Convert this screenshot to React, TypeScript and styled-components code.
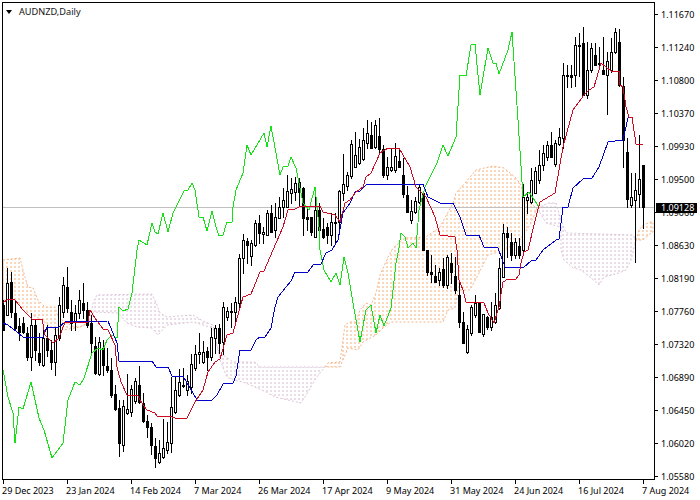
import React from "react";
import styled, { createGlobalStyle } from "styled-components";

const Global = createGlobalStyle`
  html, body { margin: 0; padding: 0; background: #fff; }
  body { width: 700px; height: 500px; overflow: hidden; }
`;

const FONT = `"Noto Sans", "Liberation Sans", Arial, sans-serif`;

const Page = styled.div`
  position: relative;
  display: flex;
  width: 700px;
  height: 500px;
  background: #fff;
  color: #000;
  font-family: ${FONT};
  font-size: 9.2px;
  overflow: hidden;
`;
const ChartColumn = styled.div`
  display: flex;
  flex-direction: column;
  width: 655px;
  flex: none;
  padding: 2px 0 0 2px;
  box-sizing: border-box;
`;
const Frame = styled.div`
  position: relative;
  width: 653px;
  height: 478px;
  box-sizing: border-box;
  border: 1px solid #000;
  flex: none;
`;
const Plot = styled.svg`
  display: block;
  width: 651px;
  height: 476px;
`;
const Title = styled.div`
  position: absolute;
  left: 3px;
  top: 3px;
  display: flex;
  align-items: center;
  gap: 7px;
  line-height: 11px;
  color: #111;
`;
const TitleArrow = styled.span`
  width: 0;
  height: 0;
  border-left: 3.5px solid transparent;
  border-right: 3.5px solid transparent;
  border-top: 4px solid #000;
`;
const DateAxis = styled.div`
  display: grid;
  grid-template-columns: repeat(11, 64px);
  width: 653px;
`;
const DateCell = styled.div`
  display: flex;
  flex-direction: column;
  white-space: nowrap;
  font-size: 9px;
  line-height: 11px;
`;
const DateTick = styled.span`
  display: block;
  width: 1px;
  height: 4px;
  margin-left: 1px;
  background: #000;
`;
const DateLabel = styled.span`
  margin-top: 1px;
`;
const PriceAxis = styled.div`
  display: flex;
  flex-direction: column;
  gap: 21px;
  padding-top: 8px;
  flex: none;
`;
const PriceRow = styled.div`
  display: flex;
  align-items: center;
  height: 12px;
  font-size: 9px;
`;
const PriceTick = styled.span`
  display: block;
  width: 3px;
  height: 1px;
  background: #000;
  margin-right: 3px;
`;
const PriceTag = styled.div`
  position: absolute;
  left: 656px;
  top: 203px;
  width: 41px;
  height: 10px;
  padding-left: 5px;
  box-sizing: border-box;
  background: #000;
  color: #fff;
  font-size: 9px;
  line-height: 10px;
`;
const Trace = styled.polyline<{ $color: string }>`
  fill: none;
  stroke: ${(p) => p.$color};
  stroke-width: 1;
  shape-rendering: crispEdges;
`;
const CloudEdge = styled.polygon<{ $warm: boolean }>`
  fill: none;
  stroke: ${(p) => (p.$warm ? "#f3b68c" : "#dcc4d8")};
  stroke-width: 1;
  stroke-dasharray: 2 2;
`;
const CloudDots = styled.line<{ $warm: boolean }>`
  stroke: ${(p) => (p.$warm ? "#fad6ba" : "#ebdde8")};
  stroke-width: 2;
  stroke-dasharray: 2 2;
  shape-rendering: crispEdges;
`;
const Wick = styled.line`
  stroke: #000;
  stroke-width: 1;
  shape-rendering: crispEdges;
`;
const Body = styled.rect<{ $bull: boolean }>`
  fill: ${(p) => (p.$bull ? "#fff" : "#000")};
  stroke: #000;
  stroke-width: 1;
  shape-rendering: crispEdges;
`;
const LastLine = styled.line`
  stroke: #c0c0c0;
  stroke-width: 1;
  shape-rendering: crispEdges;
`;

type C = [number, number, number, number, number];
const candles: C[] = [
  [300,330,305,330,0],[268,315,283,315,1],[272,317,282,312,0],[300,330,313,328,0],
  [318,340,326,332,0],[317,333,323,332,0],[327,360,333,357,0],[313,370,325,357,1],
  [320,360,325,350,0],[333,365,353,362,0],[330,366,338,365,1],[325,356,338,350,0],
  [340,369,350,362,0],[328,375,335,362,1],[297,340,305,338,1],[277,317,285,312,1],
  [267,312,287,308,0],[300,330,312,323,0],[305,330,313,322,1],[290,318,300,313,1],
  [283,318,303,310,0],[302,327,310,325,0],[315,352,323,343,0],[337,374,346,373,0],
  [337,375,342,374,1],[340,375,348,365,0],[348,372,366,370,0],[358,397,370,395,0],
  [385,410,394,409,0],[400,456,408,443,0],[400,451,406,445,1],[374,414,409,413,1],
  [385,416,389,412,1],[378,403,381,401,1],[366,403,385,402,0],[393,422,403,421,0],
  [415,437,421,427,0],[423,454,427,445,0],[438,467,446,458,0],[440,463,453,462,1],
  [419,458,448,457,1],[422,453,442,450,1],[377,452,407,443,1],[377,413,390,412,1],
  [369,396,382,395,1],[368,387,385,386,1],[375,395,381,390,1],[354,393,364,387,1],
  [345,370,354,368,1],[333,363,352,354,1],[341,363,352,362,1],[347,370,351,357,0],
  [328,360,337,357,1],[325,353,328,338,1],[324,353,328,343,0],[302,354,307,342,1],
  [307,320,311,317,1],[303,327,311,312,0],[297,322,302,312,1],[254,308,258,303,1],
  [234,273,240,258,1],[238,263,241,245,0],[240,265,243,256,1],[220,246,223,245,1],
  [215,243,223,233,0],[227,243,232,234,1],[210,235,213,235,1],[205,232,213,232,0],
  [203,237,217,230,1],[197,218,207,218,1],[188,217,200,207,1],[175,207,191,207,1],
  [178,203,189,193,1],[177,200,183,192,1],[178,205,182,192,0],[187,235,188,218,0],
  [208,230,217,219,0],[217,235,217,232,0],[187,237,210,237,1],[203,242,210,230,0],
  [218,238,229,237,0],[223,243,227,235,0],[213,245,222,235,1],[213,243,222,223,0],
  [190,230,191,222,1],[154,200,184,193,1],[172,190,175,186,1],[140,178,144,176,1],
  [132,167,155,167,1],[139,164,147,163,1],[128,160,140,159,1],[120,148,133,143,1],
  [122,148,135,148,0],[120,148,125,147,1],[118,152,136,149,0],[145,177,149,175,0],
  [157,179,167,175,1],[148,171,167,170,1],[143,172,156,170,1],[148,167,161,167,0],
  [158,197,175,194,0],[186,212,195,212,0],[200,223,211,220,1],[197,213,201,212,1],
  [184,203,187,202,1],[193,250,193,250,0],[250,275,250,272,0],[255,282,272,274,0],
  [265,282,276,282,0],[268,285,272,280,1],[258,287,269,285,0],[255,288,257,285,1],
  [253,283,263,272,0],[257,293,276,290,0],[283,327,295,322,0],[312,343,322,343,0],
  [325,353,329,352,1],[305,335,307,333,1],[295,317,303,315,1],[302,332,303,332,0],
  [314,336,314,334,1],[316,329,317,327,0],[302,330,317,327,1],[293,323,305,322,1],
  [258,309,268,308,1],[224,277,233,277,1],[227,257,233,237,0],[233,260,242,255,0],
  [238,258,242,255,1],[238,258,246,255,0],[184,255,197,250,1],[192,213,197,200,1],
  [168,203,180,202,1],[167,193,171,193,1],[150,183,165,180,1],[145,170,153,165,1],
  [141,160,145,157,1],[132,157,145,157,0],[140,166,143,164,1],[128,145,137,144,1],
  [63,148,75,138,1],[65,87,75,76,0],[65,87,75,77,0],[37,86,45,75,1],
  [33,76,45,46,0],[27,95,43,95,0],[42,98,70,95,1],[43,72,48,70,1],
  [43,65,55,65,0],[47,67,63,64,0],[37,74,70,74,0],[52,114,61,75,1],
  [38,72,52,70,1],[28,53,32,52,1],[29,86,42,85,0],[77,167,86,140,0],
  [138,207,152,199,0],[173,207,197,205,1],[173,262,190,200,1],[135,207,179,194,1],
  [165,228,165,207,0],
];

const green = "3,370 8,397 13,413 15,443 19,407 23,409 31,382 39,418 44,430 52,458 63,443 68,400 75,382 80,385 84,378 92,353 98,348 103,350 107,340 112,335 117,338 119,307 123,311 128,309 132,293 137,250 139,240 147,245 152,223 155,232 158,234 163,213 168,232 173,213 184,191 188,190 192,183 195,190 199,217 203,217 207,231 212,211 216,227 219,236 223,235 227,222 232,222 233,207 236,190 243,173 247,145 251,155 264,133 267,147 271,126 280,175 283,167 288,166 291,157 296,168 303,203 309,210 315,187 319,227 320,250 324,270 331,282 336,273 340,285 344,257 348,273 353,303 360,342 366,310 371,305 376,333 380,315 384,326 391,308 396,263 399,248 401,233 405,237 408,248 413,243 416,248 419,210 425,187 437,163 443,145 448,156 456,137 460,75 466,76 471,45 475,44 480,95 488,48 493,63 496,63 499,74 508,50 512,32 518,120 523,197 529,192 539,207";
const red = "3,303 8,299 15,300 23,310 32,319 42,319 45,335 53,343 59,338 65,322 88,322 90,310 95,318 103,329 108,330 115,345 117,367 121,382 127,395 138,396 143,405 147,410 155,413 157,416 170,416 177,419 187,418 195,402 203,390 208,372 215,362 220,359 227,335 233,333 236,322 243,297 251,294 260,272 264,271 273,250 283,227 288,210 295,209 301,206 320,206 323,212 335,215 340,222 345,203 350,200 355,193 363,187 366,177 371,173 380,153 388,148 399,148 410,167 416,187 426,197 435,217 440,235 455,237 457,250 459,280 463,290 466,302 484,303 488,313 494,323 499,307 503,282 508,279 516,279 519,275 521,263 524,252 528,250 536,217 540,202 555,193 563,147 573,110 584,95 589,90 594,87 601,63 611,71 619,71 620,85 623,87 626,107 629,117 632,117 636,144 643,144";
const blue = "3,323 8,325 17,332 23,337 43,337 47,327 59,327 65,322 108,321 117,343 119,361 152,361 156,367 168,367 172,376 183,376 197,400 212,400 217,395 223,384 233,383 236,376 240,350 251,350 256,340 260,337 265,337 271,328 275,307 278,297 286,287 291,281 295,272 308,272 313,265 321,264 326,253 332,250 338,240 343,213 350,203 355,192 360,191 366,185 376,184 423,184 428,197 440,203 453,203 460,217 466,235 479,235 484,247 498,248 505,267 523,268 531,261 536,260 543,250 556,240 559,239 563,207 568,207 573,188 583,179 592,178 599,167 608,142 623,140 628,118 632,117 636,144";

const warmClouds = [
  "3,260 20,258 23,270 28,287 33,288 38,300 45,307 55,307 58,317 65,322 72,326 80,327 90,322 80,327 63,330 55,330 42,320 23,310 17,302 3,300",
  "325,367 328,363 340,362 345,325 350,322 356,322 360,310 366,303 371,305 376,293 380,275 388,257 393,248 405,238 426,237 440,227 453,203 456,193 466,182 476,170 493,166 504,168 516,178 521,185 524,200 537,208 530,225 520,240 505,250 488,255 478,275 470,290 458,290 455,308 448,310 443,322 391,322 383,328 376,335 363,342 358,350 348,348 340,367",
  "636,240 639,230 643,225 651,222 653,222 653,232 651,233 643,240",
];
const coolClouds = [
  "90,320 93,303 97,295 152,294 157,305 160,313 167,317 193,315 203,321 213,325 218,350 222,354 233,362 255,362 260,367 325,367 316,378 308,392 301,403 288,400 275,397 266,392 255,387 243,382 233,380 227,377 220,360 213,328 193,322 167,325 158,335 152,328 137,327 127,323 118,313 93,312",
  "537,208 549,203 556,203 561,220 566,233 633,235 636,240 631,260 626,270 619,273 604,277 599,285 591,278 581,270 573,268 564,260 561,250 561,227 546,223",
];

const columns = Array.from({ length: 163 }, (_, i) => 3 + 4 * i);
const prices = ["1.11670","1.11240","1.10800","1.10370","1.09930","1.09500","1.09060","1.08630","1.08190","1.07760","1.07320","1.06890","1.06450","1.06020","1.05580"];
const dates = ["29 Dec 2023","23 Jan 2024","14 Feb 2024","7 Mar 2024","26 Mar 2024","17 Apr 2024","9 May 2024","31 May 2024","24 Jun 2024","16 Jul 2024","7 Aug 2024"];

export default function App() {
  return (
    <Page>
      <Global />
      <ChartColumn>
        <Frame>
          <Plot viewBox="3 3 651 476">
            <defs>
              <clipPath id="warmClip">
                {warmClouds.map((pts) => (
                  <polygon key={pts} points={pts} />
                ))}
              </clipPath>
              <clipPath id="coolClip">
                {coolClouds.map((pts) => (
                  <polygon key={pts} points={pts} />
                ))}
              </clipPath>
            </defs>
            <g clipPath="url(#warmClip)">
              {columns.map((x) => (
                <CloudDots key={x} $warm x1={x} x2={x} y1={150} y2={420} />
              ))}
            </g>
            <g clipPath="url(#coolClip)">
              {columns.map((x) => (
                <CloudDots key={x} $warm={false} x1={x} x2={x} y1={150} y2={420} />
              ))}
            </g>
            {warmClouds.map((pts) => (
              <CloudEdge key={pts} $warm points={pts} />
            ))}
            {coolClouds.map((pts) => (
              <CloudEdge key={pts} $warm={false} points={pts} />
            ))}
            <LastLine x1="3" x2="654" y1="207.5" y2="207.5" />
            {candles.map(([h, l, t, b, w], i) => {
              const x = 3.5 + 4 * i;
              return (
                <g key={i}>
                  <Wick x1={x} x2={x} y1={h} y2={l + 1} />
                  <Body $bull={w === 1} x={x - 1} y={t + 0.5} width={2} height={Math.max(b - t, 0)} />
                </g>
              );
            })}
            <Trace $color="#16e016" points={green} />
            <Trace $color="#0000c8" points={blue} />
            <Trace $color="#cc0a20" points={red} />
          </Plot>
          <Title>
            <TitleArrow />
            AUDNZD,Daily
          </Title>
        </Frame>
        <DateAxis>
          {dates.map((d) => (
            <DateCell key={d}>
              <DateTick />
              <DateLabel>{d}</DateLabel>
            </DateCell>
          ))}
        </DateAxis>
      </ChartColumn>
      <PriceAxis>
        {prices.map((p) => (
          <PriceRow key={p}>
            <PriceTick />
            {p}
          </PriceRow>
        ))}
      </PriceAxis>
      <PriceTag>1.09128</PriceTag>
    </Page>
  );
}
